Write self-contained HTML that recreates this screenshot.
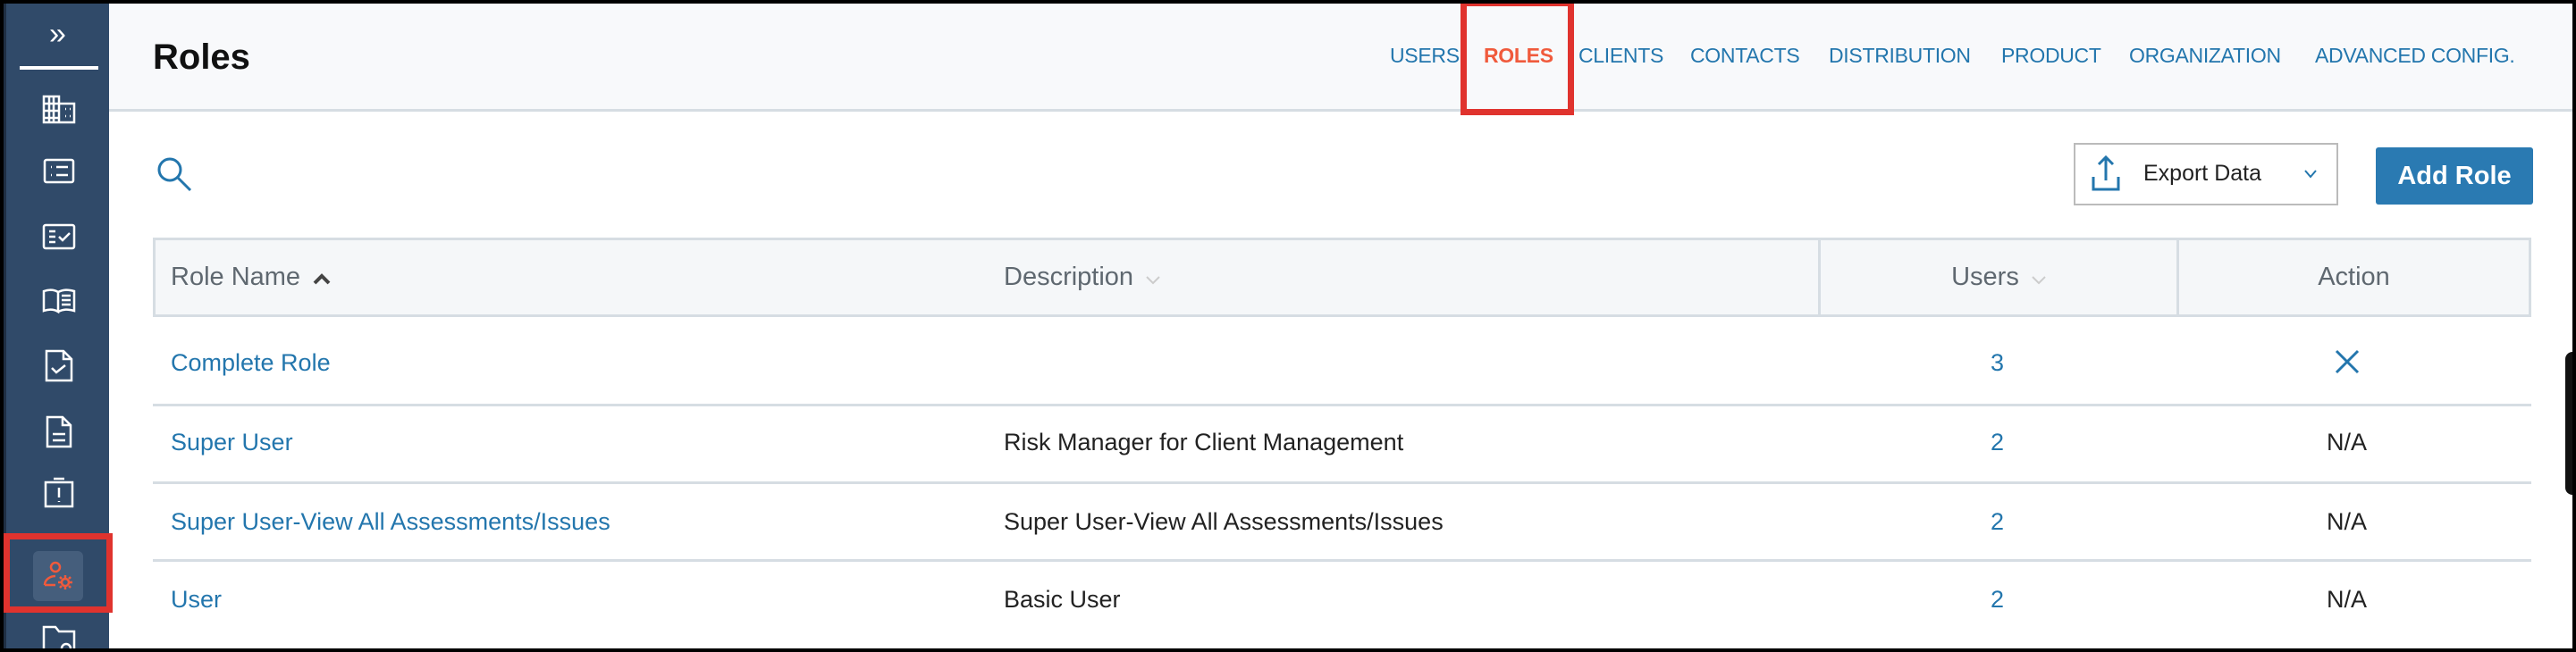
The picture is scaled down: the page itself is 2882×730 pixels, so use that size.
<!DOCTYPE html>
<html><head><meta charset="utf-8"><style>
*{box-sizing:border-box;margin:0;padding:0}
body{width:2882px;height:730px;overflow:hidden;background:#000;font-family:"Liberation Sans",sans-serif;position:relative}
.main{position:absolute;left:4px;top:4px;width:2874px;height:722px;background:#fff;overflow:hidden}
.side{position:absolute;left:0;top:0;width:118px;height:722px;background:#304a69;border-left:3px solid #1f2f44}
.hdr{position:absolute;left:118px;top:0;right:0;height:121px;background:#f8f9fb;border-bottom:3px solid #d6dde3}
.abs{position:absolute}
.nav{position:absolute;top:45px;font-size:23px;color:#2376ad;letter-spacing:-0.3px}
.ic{position:absolute;left:39px;width:40px;height:40px}
.tbl{position:absolute;left:167px;top:262px;width:2661px}
.th{position:absolute;top:0;height:89px;background:#f5f7f9;border:3px solid #d6dde3;font-size:29px;color:#5f6870;line-height:83px}
.cell{position:absolute;font-size:27px}
.sep{position:absolute;left:0;width:2661px;height:3px;background:#d6dde3}
.lnk{color:#2376ad}
</style></head><body>
<div class="main">
<div class="side">
  <div class="abs" style="left:0;width:115px;top:14px;text-align:center;color:#fff;font-size:34px;line-height:40px">»</div>
  <div class="abs" style="left:15px;top:70px;width:88px;height:4px;background:#fff"></div>
  <svg class="ic" style="top:98px" viewBox="0 0 40 40" fill="none" stroke="#fff" stroke-width="2.5"><path d="M3 6h17v29H3zM20 14h17v21H20M3 14h17M3 22h17M3 30h17M9 6v29M14 6v29M27 20h1M27 28h1M32 20h1M32 28h1"/></svg>
  <svg class="ic" style="top:168px" viewBox="0 0 40 40" fill="none" stroke="#fff" stroke-width="2.5"><rect x="4" y="7" width="32" height="25" rx="2"/><path d="M11 15h1M17 15h13M11 24h1M17 24h13"/></svg>
  <svg class="ic" style="top:242px" viewBox="0 0 40 40" fill="none" stroke="#fff" stroke-width="2.5"><rect x="3" y="6" width="34" height="26" rx="2"/><path d="M9 13h7M9 19h7M9 25h7M20 19l4 4 8-8"/></svg>
  <svg class="ic" style="top:313px" viewBox="0 0 40 40" fill="none" stroke="#fff" stroke-width="2.5"><path d="M3 9c6-2 11-2 16 1v22c-5-3-10-3-16-1zM19 10c6-3 11-3 18-1v22c-7-2-12-2-18 1M23 14h10M23 19h10M23 24h10"/></svg>
  <svg class="ic" style="top:385px" viewBox="0 0 40 40" fill="none" stroke="#fff" stroke-width="2.5"><path d="M6 4h19l9 9v24H6zM25 4v9h9M12 23l5 5 10-8"/></svg>
  <svg class="ic" style="top:459px" viewBox="0 0 40 40" fill="none" stroke="#fff" stroke-width="2.5"><path d="M7 4h17l9 9v24H7zM24 4v9h9M13 23h14M13 30h14"/></svg>
  <svg class="ic" style="top:528px" viewBox="0 0 40 40" fill="none" stroke="#fff" stroke-width="2.5"><path d="M5 8h30v27H5zM14 4h12M20 14v11M20 29v1"/></svg>
  <div class="abs" style="left:30px;top:613px;width:56px;height:56px;background:#455e7c;border-radius:6px"></div>
  <svg class="abs" style="left:38px;top:621px;width:40px;height:40px" viewBox="0 0 40 40" fill="none" stroke="#f05a3c" stroke-width="2.5"><circle cx="17" cy="10" r="5"/><path d="M5 30c0-6 6-10 12-10M5 30h12"/><circle cx="28" cy="27" r="4"/><path d="M28 19v3M28 32v3M20 27h3M33 27h3M22 21l2 2M32 31l2 2M34 21l-2 2M24 31l-2 2"/></svg>
  <div class="abs" style="left:-3px;top:593px;width:122px;height:89px;border:7px solid #e0332e"></div>
  <svg class="ic" style="top:692px" viewBox="0 0 40 40" fill="none" stroke="#fff" stroke-width="2.5"><path d="M3 38V6h13l4 5h17v27"/><circle cx="28" cy="30" r="5"/></svg>
</div>
<div class="hdr">
  <div class="abs" style="left:49px;top:38px;font-size:40px;font-weight:bold;color:#111">Roles</div>
  <div class="nav" style="left:1433px">USERS</div>
  <div class="nav" style="left:1538px;color:#f05a3c;font-weight:bold">ROLES</div>
  <div class="nav" style="left:1644px">CLIENTS</div>
  <div class="nav" style="left:1769px">CONTACTS</div>
  <div class="nav" style="left:1924px">DISTRIBUTION</div>
  <div class="nav" style="left:2117px">PRODUCT</div>
  <div class="nav" style="left:2260px">ORGANIZATION</div>
  <div class="nav" style="left:2468px">ADVANCED CONFIG.</div>
  <div class="abs" style="left:1512px;top:-4px;width:127px;height:129px;border:7px solid #e0332e"></div>
</div>
<svg class="abs" style="left:170px;top:170px;width:42px;height:42px" viewBox="0 0 42 42" fill="none" stroke="#2376ad" stroke-width="3"><circle cx="16" cy="16" r="12"/><path d="M25 25l14 14"/></svg>
<div class="abs" style="left:2316px;top:156px;width:296px;height:70px;border:2px solid #bbb;background:#fff"></div>
<svg class="abs" style="left:2334px;top:168px;width:36px;height:44px" viewBox="0 0 36 44" fill="none" stroke="#2376ad" stroke-width="3"><path d="M18 30V4M10 12l8-8 8 8M4 26v14h28V26"/></svg>
<div class="abs" style="left:2394px;top:176px;font-size:25px;color:#222">Export Data</div>
<svg class="abs" style="left:2574px;top:186px;width:14px;height:10px" viewBox="0 0 14 10" fill="none" stroke="#2376ad" stroke-width="2"><path d="M1 1l6 7 6-7"/></svg>
<div class="abs" style="left:2654px;top:161px;width:176px;height:64px;background:#2a7ab2;border-radius:3px;color:#fff;font-size:29px;font-weight:bold;text-align:center;line-height:64px">Add Role</div>
<div class="tbl">
  <div class="th" style="left:0;width:935px;padding-left:17px">Role Name <svg style="width:20px;height:14px;margin-left:6px" viewBox="0 0 20 14" fill="none" stroke="#444" stroke-width="4"><path d="M2 12l8-8 8 8"/></svg></div>
  <div class="th" style="left:932px;width:934px;padding-left:20px;border-left:none">Description <svg style="width:16px;height:10px;margin-left:6px" viewBox="0 0 16 10" fill="none" stroke="#ccc" stroke-width="2"><path d="M1 1l7 7 7-7"/></svg></div>
  <div class="th" style="left:1863px;width:404px;text-align:center;border-left:3px solid #d6dde3">Users <svg style="width:16px;height:10px;margin-left:6px" viewBox="0 0 16 10" fill="none" stroke="#ccc" stroke-width="2"><path d="M1 1l7 7 7-7"/></svg></div>
  <div class="th" style="left:2264px;width:397px;text-align:center">Action</div>
  <div class="cell lnk" style="left:20px;top:125px">Complete Role</div>
  <div class="cell lnk" style="left:2056px;top:125px;width:10px">3</div>
  <svg class="abs" style="left:2441px;top:125px;width:28px;height:28px" viewBox="0 0 28 28" stroke="#2376ad" stroke-width="3"><path d="M2 2l24 24M26 2L2 26"/></svg>
  <div class="sep" style="top:186px"></div>
  <div class="cell lnk" style="left:20px;top:214px">Super User</div>
  <div class="cell" style="left:952px;top:214px;color:#222">Risk Manager for Client Management</div>
  <div class="cell lnk" style="left:2056px;top:214px">2</div>
  <div class="cell" style="left:2432px;top:214px;color:#222">N/A</div>
  <div class="sep" style="top:273px"></div>
  <div class="cell lnk" style="left:20px;top:303px">Super User-View All Assessments/Issues</div>
  <div class="cell" style="left:952px;top:303px;color:#222">Super User-View All Assessments/Issues</div>
  <div class="cell lnk" style="left:2056px;top:303px">2</div>
  <div class="cell" style="left:2432px;top:303px;color:#222">N/A</div>
  <div class="sep" style="top:360px"></div>
  <div class="cell lnk" style="left:20px;top:390px">User</div>
  <div class="cell" style="left:952px;top:390px;color:#222">Basic User</div>
  <div class="cell lnk" style="left:2056px;top:390px">2</div>
  <div class="cell" style="left:2432px;top:390px;color:#222">N/A</div>
</div>
<div class="abs" style="left:2866px;top:390px;width:12px;height:160px;background:#111;border-radius:8px 0 0 8px"></div>
</div>
</body></html>
